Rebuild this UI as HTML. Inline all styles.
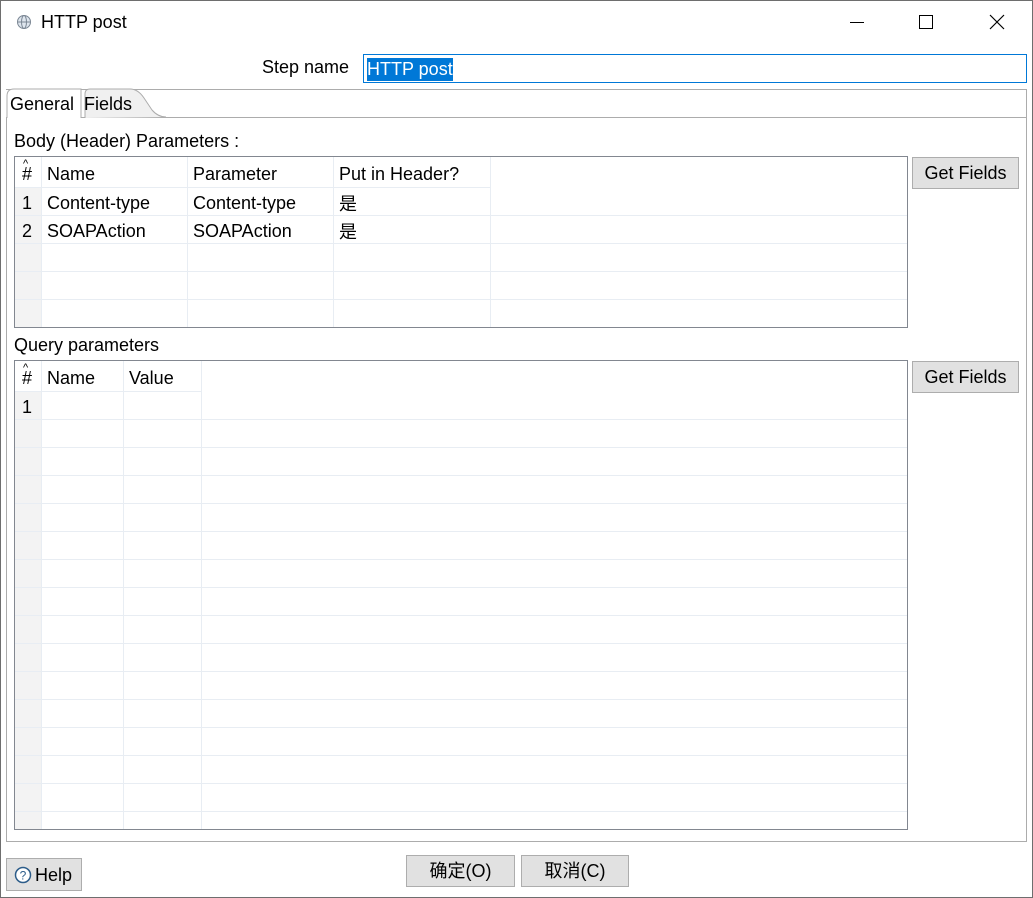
<!DOCTYPE html><html><head><style>
body{margin:0;width:1033px;height:898px;background:#fff;font-family:"Liberation Sans","Noto Sans CJK SC",sans-serif;font-size:18px;color:#000;position:relative;overflow:hidden}
.a{position:absolute;white-space:nowrap}
.btn{position:absolute;background:#e1e1e1;border:1px solid #adadad;text-align:center;box-sizing:border-box}
.tbl{position:absolute;border:1px solid #828790;box-sizing:border-box;background:#fff;overflow:hidden}
.t{margin-top:1px}
</style></head><body>
<div class="a" style="left:0;top:0;width:1031px;height:896px;border:1px solid #6e6e6e"></div>
<svg class="a" style="left:16px;top:14px" width="16" height="16"><circle cx="8" cy="8" r="6.5" fill="#dfe6ee" stroke="#7b8794"/><ellipse cx="8" cy="8" rx="2.5" ry="6.5" fill="none" stroke="#7b8794"/><line x1="1.5" y1="8" x2="14.5" y2="8" stroke="#7b8794"/></svg>
<div class="a" style="left:41px;top:12px">HTTP post</div>
<div class="a" style="left:850px;top:22px;width:14px;height:1px;background:#000"></div>
<div class="a" style="left:919px;top:15px;width:14px;height:14px;border:1px solid #000;box-sizing:border-box"></div>
<svg class="a" style="left:989px;top:14px" width="16" height="16"><path d="M1 1L15 15M15 1L1 15" stroke="#000" stroke-width="1.2"/></svg>
<div class="a" style="left:262px;top:57px">Step name</div>
<div class="a" style="left:363px;top:54px;width:664px;height:29px;border:1px solid #0078d7;box-sizing:border-box"></div>
<div class="a" style="left:367px;top:58px;height:23px;background:#0078d7;color:#fff;line-height:23px">HTTP post</div>
<div class="a" style="left:6px;top:117px;width:1021px;height:725px;border:1px solid #acacac;box-sizing:border-box"></div>
<div class="a" style="left:6px;top:89px;width:1021px;height:28px;border-top:1px solid #acacac;border-right:1px solid #acacac;box-sizing:border-box"></div>
<svg class="a" style="left:6px;top:88px" width="160" height="31"><path d="M1 30V8Q1 1 8 1H75V30" fill="#fff" stroke="#acacac"/><path d="M79 30V6Q79 1 84 1H124Q132 1 138 10L146 22Q152 29 160 29" fill="#f0f0f0" stroke="#acacac"/></svg>
<div class="a" style="left:10px;top:94px">General</div>
<div class="a" style="left:84px;top:94px">Fields</div>
<div class="a" style="left:14px;top:131px">Body (Header) Parameters :</div>
<div class="tbl" style="left:14px;top:156px;width:894px;height:172px">
<svg width="894" height="172" style="position:absolute;left:0;top:0"><rect x="0" y="30" width="26" height="142" fill="#f3f3f3"/>
<g stroke="#e8edf3"><line x1="0" y1="58.5" x2="894" y2="58.5"/><line x1="0" y1="86.5" x2="894" y2="86.5"/><line x1="0" y1="114.5" x2="894" y2="114.5"/><line x1="0" y1="142.5" x2="894" y2="142.5"/><line x1="26.5" y1="0" x2="26.5" y2="172"/><line x1="172.5" y1="0" x2="172.5" y2="172"/><line x1="318.5" y1="0" x2="318.5" y2="172"/><line x1="475.5" y1="0" x2="475.5" y2="172"/></g>
<line x1="0" y1="30.5" x2="475" y2="30.5" stroke="#e8edf3"/></svg>
</div>
<div class="a" style="left:22px;top:164px">#</div><div class="a" style="left:23px;top:158px;font-size:11px">^</div>
<div class="a" style="left:47px;top:164px">Name</div><div class="a" style="left:193px;top:164px">Parameter</div><div class="a" style="left:339px;top:164px">Put in Header?</div>
<div class="a" style="left:22px;top:193px">1</div><div class="a" style="left:47px;top:193px">Content-type</div><div class="a" style="left:193px;top:193px">Content-type</div><div class="a" style="left:339px;top:190px">是</div>
<div class="a" style="left:22px;top:221px">2</div><div class="a" style="left:47px;top:221px">SOAPAction</div><div class="a" style="left:193px;top:221px">SOAPAction</div><div class="a" style="left:339px;top:218px">是</div>
<div class="btn" style="left:912px;top:157px;width:107px;height:32px;line-height:31px">Get Fields</div>
<div class="a" style="left:14px;top:335px">Query parameters</div>
<div class="tbl" style="left:14px;top:360px;width:894px;height:470px">
<svg width="894" height="470" style="position:absolute;left:0;top:0"><rect x="0" y="30" width="26" height="440" fill="#f3f3f3"/>
<g stroke="#e8edf3">
<line x1="0" y1="58.5" x2="894" y2="58.5"/><line x1="0" y1="86.5" x2="894" y2="86.5"/><line x1="0" y1="114.5" x2="894" y2="114.5"/><line x1="0" y1="142.5" x2="894" y2="142.5"/><line x1="0" y1="170.5" x2="894" y2="170.5"/><line x1="0" y1="198.5" x2="894" y2="198.5"/><line x1="0" y1="226.5" x2="894" y2="226.5"/><line x1="0" y1="254.5" x2="894" y2="254.5"/><line x1="0" y1="282.5" x2="894" y2="282.5"/><line x1="0" y1="310.5" x2="894" y2="310.5"/><line x1="0" y1="338.5" x2="894" y2="338.5"/><line x1="0" y1="366.5" x2="894" y2="366.5"/><line x1="0" y1="394.5" x2="894" y2="394.5"/><line x1="0" y1="422.5" x2="894" y2="422.5"/><line x1="0" y1="450.5" x2="894" y2="450.5"/>
<line x1="26.5" y1="0" x2="26.5" y2="470"/><line x1="108.5" y1="0" x2="108.5" y2="470"/><line x1="186.5" y1="0" x2="186.5" y2="470"/><line x1="0" y1="30.5" x2="186" y2="30.5"/></g></svg>
</div>
<div class="a" style="left:22px;top:368px">#</div><div class="a" style="left:23px;top:362px;font-size:11px">^</div>
<div class="a" style="left:47px;top:368px">Name</div><div class="a" style="left:129px;top:368px">Value</div>
<div class="a" style="left:22px;top:397px">1</div>
<div class="btn" style="left:912px;top:361px;width:107px;height:32px;line-height:31px">Get Fields</div>
<div class="btn" style="left:6px;top:858px;width:76px;height:33px"></div>
<svg class="a" style="left:14px;top:866px" width="18" height="18"><circle cx="9" cy="9" r="7.5" fill="#fff" stroke="#2d5d8a" stroke-width="1.5"/><text x="9" y="13.5" font-size="12" text-anchor="middle" fill="#2d5d8a" font-family="Liberation Sans">?</text></svg>
<div class="a" style="left:35px;top:865px">Help</div>
<div class="btn" style="left:406px;top:855px;width:109px;height:32px;line-height:31px">确定(O)</div>
<div class="btn" style="left:521px;top:855px;width:108px;height:32px;line-height:31px">取消(C)</div>
</body></html>
